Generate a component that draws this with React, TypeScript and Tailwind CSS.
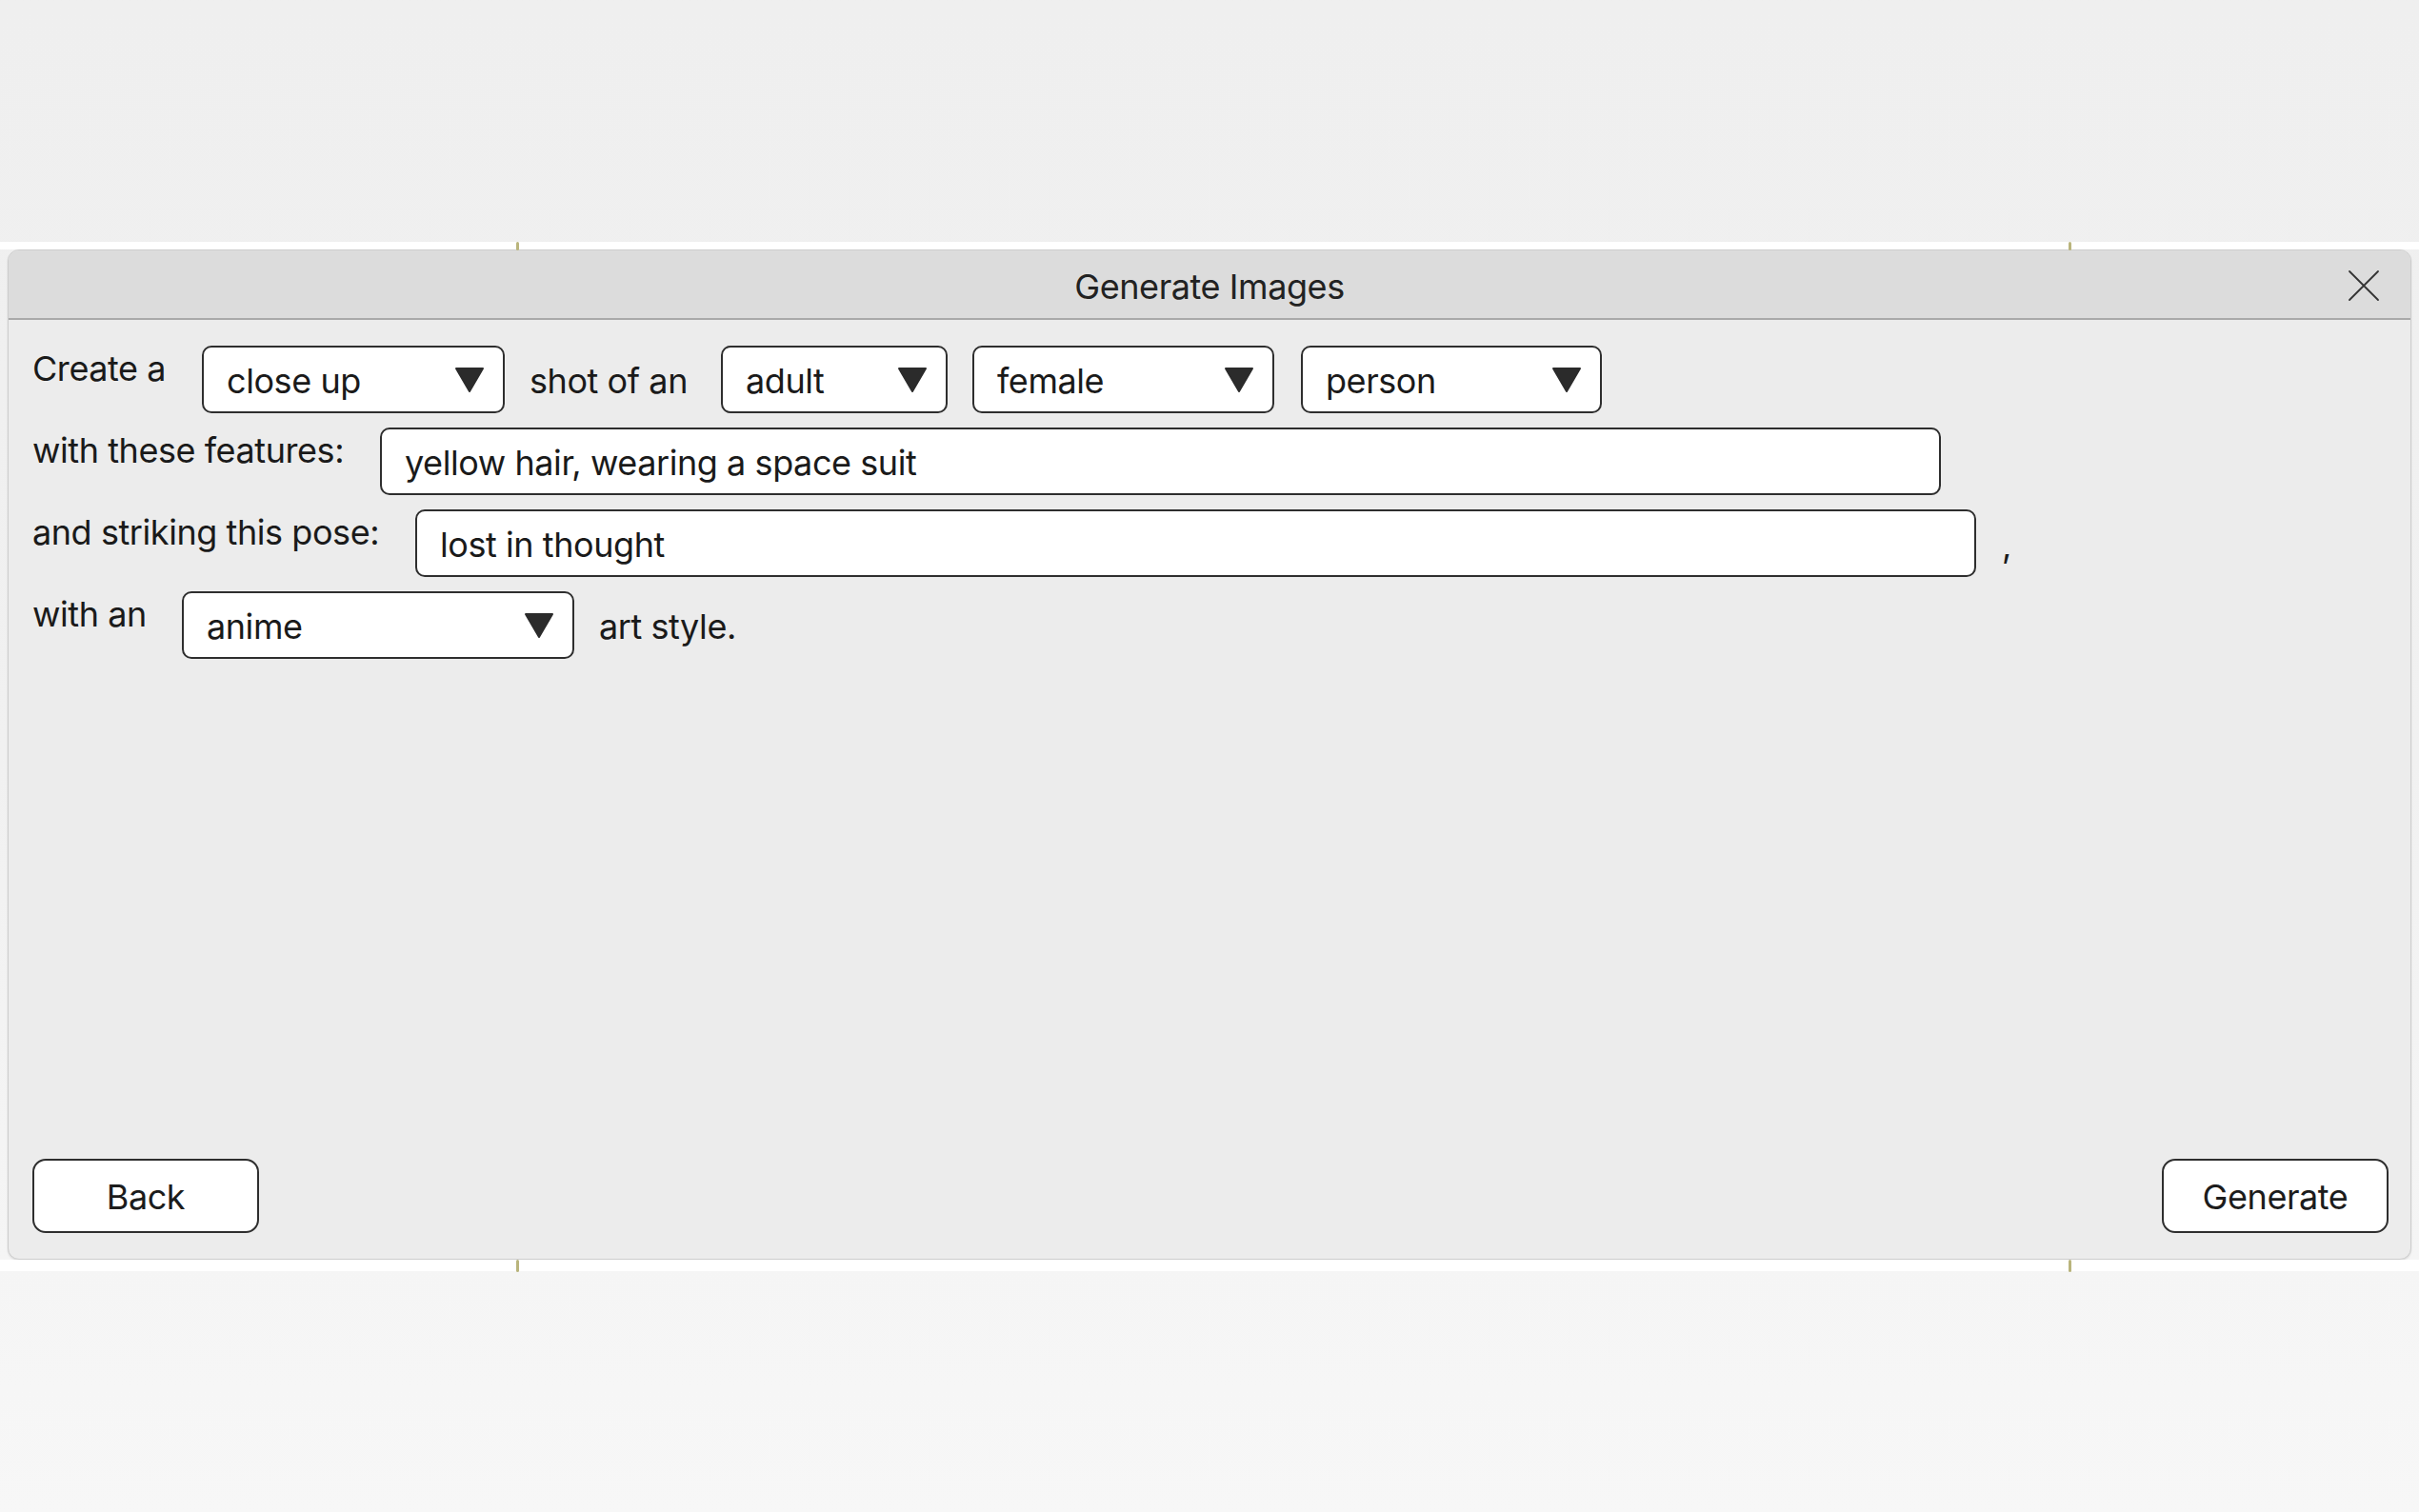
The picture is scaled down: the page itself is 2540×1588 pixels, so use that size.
import React from "react"

function Caret() {
  return (
    <svg width="32" height="28" viewBox="0 0 32 28" className="shrink-0">
      <path d="M2 2 H30 L16 26 Z" fill="#2b2b2b" stroke="#2b2b2b" strokeWidth="2" strokeLinejoin="round" />
    </svg>
  )
}

function Dropdown({ value, className }: { value: string; className: string }) {
  return (
    <div
      className={`flex h-[71px] shrink-0 items-center justify-between rounded-[10px] border-2 border-[#2e2e2e] bg-white pl-[24px] pr-[19px] ${className}`}
    >
      <span className="pt-[2px]">{value}</span>
      <Caret />
    </div>
  )
}

function TextField({ value, className }: { value: string; className: string }) {
  return (
    <div
      className={`flex h-[71px] shrink-0 items-center rounded-[10px] border-2 border-[#2e2e2e] bg-white pl-[24px] ${className}`}
    >
      <span className="whitespace-nowrap pt-[2px]">{value}</span>
    </div>
  )
}

function Button({ label }: { label: string }) {
  return (
    <button className="flex h-[78px] w-[238px] items-center justify-center rounded-[14px] border-2 border-[#2e2e2e] bg-white pt-[2px] text-[#1c1c1c]">
      {label}
    </button>
  )
}

function Hanger({ className }: { className: string }) {
  return <span className={`absolute w-[3px] rounded-full bg-[#b9b47c] ${className}`} />
}

export default function App() {
  return (
    <div className="min-h-[1588px] w-full bg-linear-to-b from-[#efefef] via-[#f1f1f1] to-[#f7f7f7] pt-[254px] font-[Inter,sans-serif] text-[36px] leading-none tracking-[-0.012em] text-[#1a1a1a]">
      {/* hanging strip above the window */}
      <div className="relative h-[8px] w-full bg-white">
        <Hanger className="left-[542px] top-0 h-[9px]" />
        <Hanger className="left-[2172px] top-0 h-[9px]" />
      </div>

      <div className="mx-[8px] flex h-[1061px] flex-col overflow-hidden rounded-[12px] border border-[#cdcdcd] bg-[#ececec] shadow-[0_1px_2px_rgba(0,0,0,0.12)]">
        <div className="relative flex h-[73px] shrink-0 items-center justify-center border-b-2 border-[#a9a9a9] bg-[#dcdcdc] pt-[5px] text-[#222]">
          <span>Generate Images</span>
          <svg width="34" height="34" viewBox="0 0 34 34" className="absolute right-[32px] top-[20px]">
            <path d="M2 2 L32 32 M32 2 L2 32" stroke="#333" strokeWidth="1.8" strokeLinecap="round" />
          </svg>
        </div>

        <div className="flex flex-1 flex-col pb-[27px] pl-[25px] pr-[23px] pt-[27px]">
          <div className="flex flex-col gap-[15px]">
            <div className="flex items-center">
              <span className="mb-[23px] w-[178px] shrink-0">Create a</span>
              <Dropdown value="close up" className="w-[318px]" />
              <span className="w-[227px] shrink-0 pl-[26px] pt-[2px]">shot of an</span>
              <Dropdown value="adult" className="w-[238px]" />
              <Dropdown value="female" className="ml-[26px] w-[317px]" />
              <Dropdown value="person" className="ml-[28px] w-[316px]" />
            </div>

            <div className="flex items-center">
              <span className="mb-[23px] w-[365px] shrink-0">with these features:</span>
              <TextField value="yellow hair, wearing a space suit" className="w-[1639px]" />
            </div>

            <div className="flex items-center">
              <span className="mb-[23px] w-[402px] shrink-0">and striking this pose:</span>
              <TextField value="lost in thought" className="w-[1639px]" />
              <span className="pl-[27px] pt-[4px]">,</span>
            </div>

            <div className="flex items-center">
              <span className="mb-[23px] w-[157px] shrink-0">with an</span>
              <Dropdown value="anime" className="w-[412px]" />
              <span className="pl-[26px] pt-[2px]">art style.</span>
            </div>
          </div>

          <div className="flex-1" />

          <div className="flex items-center justify-between">
            <Button label="Back" />
            <Button label="Generate" />
          </div>
        </div>
      </div>

      {/* strip below the window */}
      <div className="relative h-[12px] w-full bg-white">
        <Hanger className="left-[542px] top-0 h-[13px] w-[2px]" />
        <Hanger className="left-[2172px] top-0 h-[13px] w-[2px]" />
      </div>
    </div>
  )
}
